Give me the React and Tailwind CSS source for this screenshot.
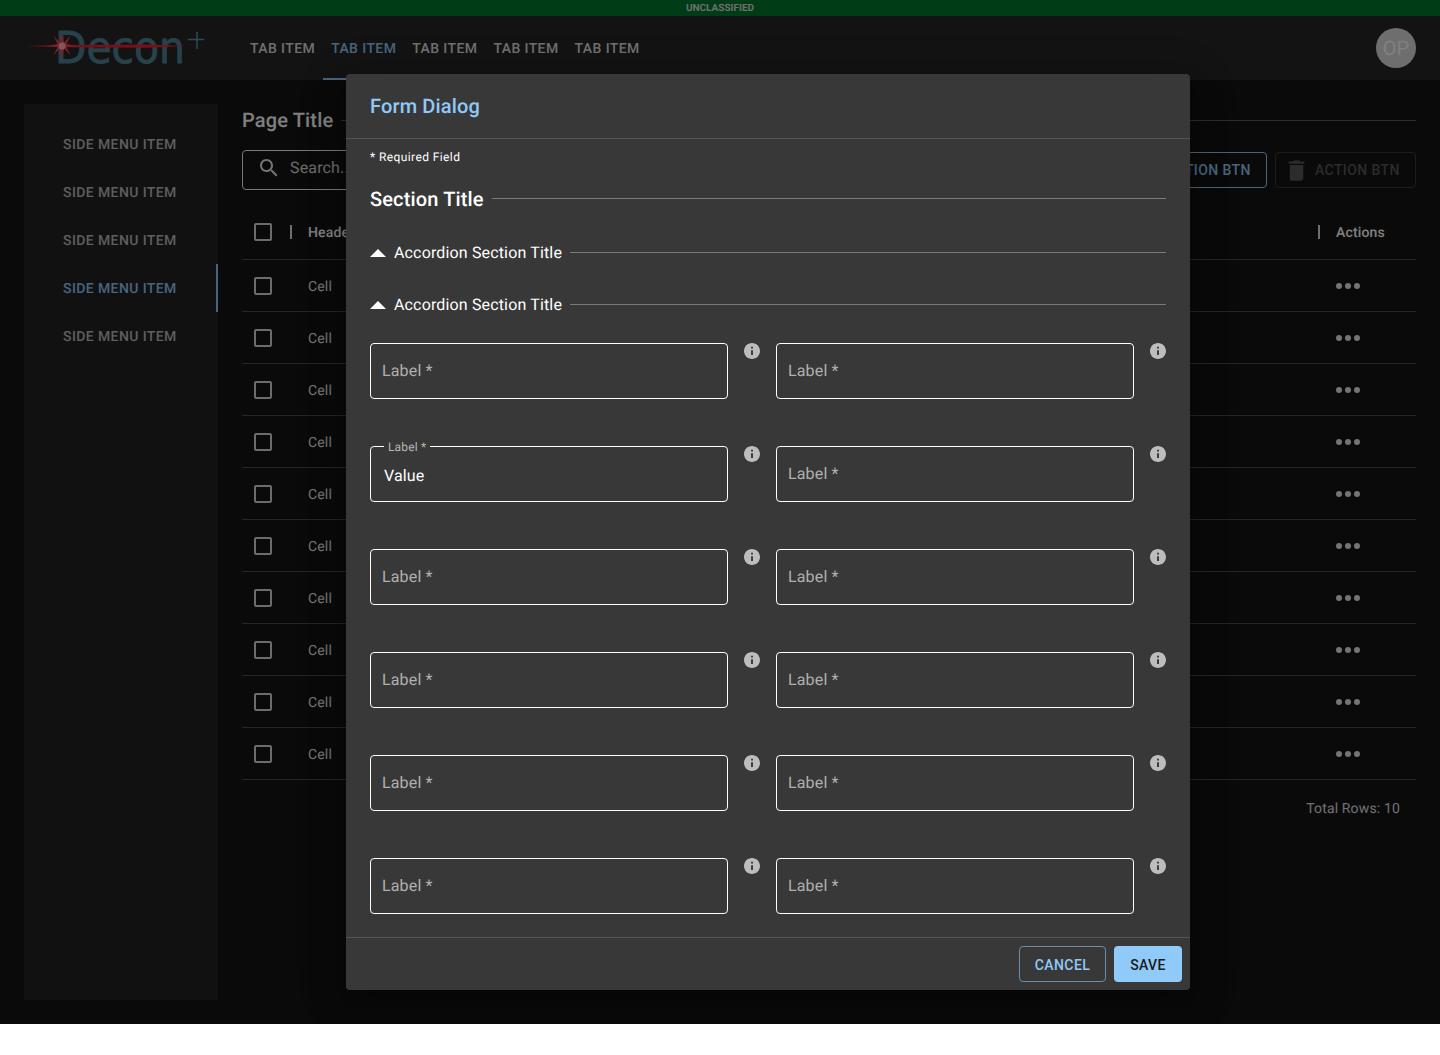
import React from 'react';

const rows = [1, 2, 3, 4, 5, 6, 7, 8, 9, 10];
const fields = [
  'Label *', 'Label *',
  'value', 'Label *',
  'Label *', 'Label *',
  'Label *', 'Label *',
  'Label *', 'Label *',
  'Label *', 'Label *',
];

const Logo = () => (
  <svg width="182" height="60" viewBox="0 0 182 60" className="shrink-0">
    <text x="31" y="45" textLength="130" lengthAdjust="spacingAndGlyphs" fontFamily="DejaVu Sans" fontSize="44" fill="#508499" stroke="#508499" strokeWidth="0.800">Decon</text>
    <path d="M173 14v17M164 21.500h16" stroke="#5a93aa" strokeWidth="1.500" fill="none" />
    <path d="M2 28L38 27L125 26.500L162 28L125 29.800L38 29.200z" fill="#f02030" />
    <path d="M38 15l2 10 6.500-7.500-4 8.500 10.500 2-10.500 1 4 8.500-6.500-7.500-2 10-2-10-6.500 7.500 4-8.500-10.500-1 10.500-2-4-8.500 6.500 7.500z" fill="#ff3c4c" />
    <circle cx="38" cy="28" r="3.500" fill="#ffb0b5" />
  </svg>
);

const Checkbox = () => (
  <div className="w-[18px] h-[18px] shrink-0 rounded-[2px] border-2 border-[#d8d8d8]" />
);

const Dots = () => (
  <svg width="24" height="6" viewBox="0 0 24 6">
    <circle cx="3" cy="3" r="3" fill="#e8e8e8" />
    <circle cx="12" cy="3" r="3" fill="#e8e8e8" />
    <circle cx="21" cy="3" r="3" fill="#e8e8e8" />
  </svg>
);

const InfoIcon = () => (
  <svg viewBox="2 2 20 20" className="w-4 h-4 ml-4 shrink-0 fill-[#bdbdbd]">
    <path d="M12 2C6.480 2 2 6.480 2 12s4.480 10 10 10 10-4.480 10-10S17.520 2 12 2zm1.200 15h-2.400v-6h2.400v6zm0-8h-2.400V6.800h2.400V9z" />
  </svg>
);

const SearchIcon = () => (
  <svg viewBox="0 0 24 24" className="w-6 h-6 fill-[#e8e8e8] shrink-0">
    <path d="M15.500 14h-.790l-.280-.270C15.410 12.590 16 11.110 16 9.500 16 5.910 13.090 3 9.500 3S3 5.910 3 9.500 5.910 16 9.500 16c1.610 0 3.090-.590 4.230-1.570l.270.280v.790l5 4.990L20.490 19l-4.990-5zm-6 0C7.010 14 5 11.990 5 9.500S7.010 5 9.500 5 14 7.010 14 9.500 11.990 14 9.500 14z" />
  </svg>
);

const DeleteIcon = () => (
  <svg viewBox="0 0 24 24" className="w-[27px] h-[27px] fill-current shrink-0 mr-[5px]">
    <path d="M6 19c0 1.100.900 2 2 2h8c1.100 0 2-.900 2-2V7H6v12zM19 4h-3.500l-1-1h-5l-1 1H5v2h14V4z" />
  </svg>
);

const AccordionTitle = ({ className }) => (
  <div className={`flex items-center h-6 ${className}`}>
    <svg viewBox="7 9 10 5" className="w-4 h-2 mt-[2px] fill-white shrink-0">
      <path d="M7 14l5-5 5 5z" />
    </svg>
    <span className="ml-2 pt-[2px] text-base tracking-[0.15px] text-white whitespace-nowrap">Accordion Section Title</span>
    <div className="flex-1 ml-2 h-px bg-[#7a7a7a]" />
  </div>
);

const Field = ({ value }) => (
  <div className="flex items-start">
    <div className="relative w-[358px] h-14 shrink-0 rounded-[4px] border border-white flex items-center">
      {value ? (
        <>
          <span className="absolute -top-[8px] left-[13px] px-1 bg-[#383838] text-xs leading-4 tracking-[0.15px] text-[#b5b5b5]">Label *</span>
          <span className="pl-[13px] pt-[3px] text-base tracking-[0.15px] text-white">Value</span>
        </>
      ) : (
        <span className="pl-[11px] text-base tracking-[0.15px] text-[#b0b0b0]">Label *</span>
      )}
    </div>
    <InfoIcon />
  </div>
);

const ActionBtn = ({ label, disabled }) => (
  <button className={`flex items-center w-[141px] h-9 pl-[7px] rounded-[4px] border text-sm font-medium tracking-[0.4px] ${disabled ? 'border-[#3a3a3a] text-[#585858]' : 'border-[#90caf9] text-[#90caf9]'}`}>
    <DeleteIcon />
    {label}
  </button>
);

export default function App() {
  return (
    <div className="[font-family:Roboto,sans-serif] [text-rendering:geometricPrecision] antialiased">
      <div className="relative h-[1024px] bg-[#141414] flex flex-col">
        <div className="h-4 bg-[#007a2f] flex items-center justify-center text-[10px] font-bold text-[#dcdcdc]">UNCLASSIFIED</div>

        <header className="h-16 bg-[#262626] flex items-center pl-[24px] pr-6">
          <Logo />
          <nav className="flex ml-[36px] h-full">
            {rows.slice(0, 5).map((n) => (
              <div key={n} className={`flex items-center px-2 text-sm font-medium tracking-[0.4px] ${n === 2 ? 'text-[#90caf9] border-b-2 border-[#90caf9] pt-[4px]' : 'text-[#dedede] pt-[2px]'}`}>TAB ITEM</div>
            ))}
          </nav>
          <div className="ml-auto w-10 h-10 rounded-full bg-[#dcdcdc] flex items-center justify-center text-xl text-white">OP</div>
        </header>

        <main className="flex-1 flex pl-6 pr-6 pt-6">
          <aside className="w-[194px] h-[896px] bg-[#222222] pt-4 shrink-0">
            {rows.slice(0, 5).map((n) => (
              <div key={n} className={`h-12 flex items-center pl-[39px] pt-[2px] text-sm font-medium tracking-[0.4px] ${n === 4 ? 'text-[#90caf9] border-r-2 border-[#90caf9]' : 'text-[#bcbcbc]'}`}>SIDE MENU ITEM</div>
            ))}
          </aside>

          <section className="flex-1 ml-6 pt-[2px]">
            <div className="flex items-center h-7">
              <h1 className="text-xl font-medium tracking-[0.15px] text-white">Page Title</h1>
              <div className="flex-1 ml-2 h-px bg-[#5a5a5a]" />
            </div>

            <div className="flex items-center justify-between mt-4 h-10">
              <div className="flex items-center w-[400px] h-10 rounded-[4px] border border-[#f0f0f0] pl-[14px] pb-1">
                <SearchIcon />
                <span className="ml-[9px] text-base tracking-[0.15px] text-[#d8d8d8]">Search...</span>
              </div>
              <div className="flex gap-2">
                <ActionBtn label="ACTION BTN" />
                <ActionBtn label="ACTION BTN" disabled />
              </div>
            </div>

            <div className="flex items-center mt-4 h-[54px] pb-[2px] border-b border-[#4a4a4a] pl-3 text-sm font-medium tracking-[0.15px] text-white">
              <Checkbox />
              <div className="ml-[18px] w-[2px] h-[14px] bg-[#e0e0e0]" />
              <span className="ml-4 pt-[2px]">Header</span>
              <div className="ml-auto w-[2px] h-[14px] bg-[#e0e0e0]" />
              <span className="ml-4 pt-[2px] w-[80px]">Actions</span>
            </div>

            {rows.map((n) => (
              <div key={n} className="flex items-center h-[52px] border-b border-[#4a4a4a] pl-3 text-sm tracking-[0.15px] text-[#e8e8e8]">
                <Checkbox />
                <span className="ml-9 pt-[2px]">Cell</span>
                <div className="ml-auto w-[80px]"><Dots /></div>
              </div>
            ))}

            <div className="h-14 pt-[2px] flex items-center justify-end pr-4 text-sm tracking-[0.15px] text-[#e0e0e0]">Total Rows: 10</div>
          </section>
        </main>

        <div className="absolute inset-0 bg-black/50 flex items-start pl-[346px] pt-[74px]">
          <div className="flex flex-col w-[844px] h-[916px] bg-[#383838] rounded-[4px] shadow-[0_11px_15px_-7px_rgba(0,0,0,0.2),0_24px_38px_3px_rgba(0,0,0,0.14),0_9px_46px_8px_rgba(0,0,0,0.12)]">
            <div className="h-[65px] shrink-0 flex items-center px-6 border-b border-[#555555] text-xl font-medium tracking-[0.15px] text-[#90caf9]">Form Dialog</div>

            <div className="flex-1 px-6 pt-[10px]">
              <p className="h-4 text-xs leading-4 tracking-[0.4px] text-white">* Required Field</p>
              <div className="flex items-center h-7 mt-5">
                <h2 className="text-xl font-medium tracking-[0.15px] text-white whitespace-nowrap">Section Title</h2>
                <div className="flex-1 ml-2 mb-[2px] h-px bg-[#7a7a7a]" />
              </div>
              <AccordionTitle className="mt-[27px]" />
              <AccordionTitle className="mt-[28px]" />
              <div className="grid grid-cols-2 gap-x-4 gap-y-[47px] mt-[27px]">
                {fields.map((f, i) => (
                  <Field key={i} value={f === 'value'} />
                ))}
              </div>
            </div>

            <div className="h-[53px] shrink-0 flex items-center justify-end gap-2 px-2 border-t border-[#555555]">
              <button className="w-[87px] h-9 pt-px rounded-[4px] border border-[#6b8ba6] text-sm font-medium tracking-[0.4px] text-[#90caf9]">CANCEL</button>
              <button className="w-[68px] h-9 pt-px rounded-[4px] bg-[#90caf9] text-sm font-medium tracking-[0.4px] text-[#1a1a1a]">SAVE</button>
            </div>
          </div>
        </div>
      </div>
    </div>
  );
}
